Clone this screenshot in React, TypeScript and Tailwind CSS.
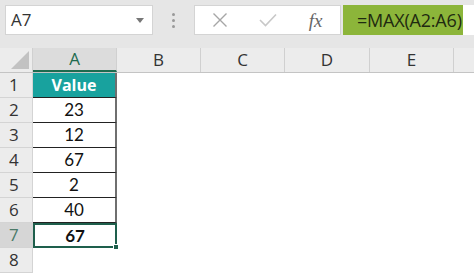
const cols = [
  { name: "A", w: "w-[84px]" },
  { name: "B", w: "w-[84px]" },
  { name: "C", w: "w-[84px]" },
  { name: "D", w: "w-[85px]" },
  { name: "E", w: "w-[84px]" },
];

const values = ["23", "12", "67", "2", "40"];

export default function App() {
  return (
    <div className="w-[474px] h-[276px] bg-white overflow-hidden font-['Open_Sans',sans-serif] text-[#222]">
      {/* Formula bar */}
      <div className="h-[48px] bg-[#e6e6e6] flex items-start pt-[5px]">
        <div className="ml-[5px] w-[148px] h-[30px] bg-white border border-[#d4d4d4] flex items-center justify-between pl-[5px] pr-[8px]">
          <span className="text-[17px] text-[#333]">A7</span>
          <svg width="8" height="5" viewBox="0 0 8 5">
            <path d="M0 0 H8 L4 5 Z" fill="#777" />
          </svg>
        </div>
        <div className="w-[41px] h-[30px] flex flex-col items-center justify-center gap-[3px]">
          <span className="w-[3px] h-[3px] rounded-full bg-[#999]" />
          <span className="w-[3px] h-[3px] rounded-full bg-[#999]" />
          <span className="w-[3px] h-[3px] rounded-full bg-[#999]" />
        </div>
        <div className="w-[147px] h-[30px] bg-white border border-[#d4d4d4] flex items-center">
          <div className="w-[50px] flex justify-center">
            <svg width="16" height="16" viewBox="0 0 16 16">
              <path d="M1.5 1.5 L14.5 14.5 M14.5 1.5 L1.5 14.5" stroke="#a6a6a6" strokeWidth="1.4" fill="none" />
            </svg>
          </div>
          <div className="w-[46px] flex justify-center">
            <svg width="18" height="14" viewBox="0 0 18 14">
              <path d="M1 7 L6.5 12.5 L17 1.5" stroke="#c8c8c8" strokeWidth="1.6" fill="none" />
            </svg>
          </div>
          <div className="flex-1 flex justify-center">
            <span className="font-['Liberation_Serif',serif] italic text-[19px] text-[#666] leading-none">
              fx
            </span>
          </div>
        </div>
        <div className="ml-[2px] w-[120px] h-[30px] bg-[#8cb53a] flex items-center pl-[14px]">
          <span className="text-[18px] text-[#1f2a10] tracking-[-0.2px]">=MAX(A2:A6)</span>
        </div>
        <div className="flex-1 h-[30px] bg-white" />
      </div>

      {/* Column headers */}
      <div className="flex h-[25px] bg-[#ececec] border-b border-[#c4c4c4]">
        <div className="w-[33px] h-full border-r border-[#d0d0d0] flex items-end justify-end pr-[3px] pb-[3px]">
          <svg width="18" height="18" viewBox="0 0 18 18">
            <path d="M18 0 V18 H0 Z" fill="#c2c2c2" />
          </svg>
        </div>
        {cols.map((c) => (
          <div
            key={c.name}
            className={`${c.w} h-full border-r border-[#d0d0d0] flex items-center justify-center text-[17px] ${
              c.name === "A" ? "bg-[#dcdcdc] text-[#1e6b4f] border-b-2 border-b-[#1e6b4f]" : "text-[#333]"
            }`}
          >
            {c.name}
          </div>
        ))}
        <div className="flex-1 h-full" />
      </div>

      {/* Rows */}
      {Array.from({ length: 8 }, (_, i) => {
        const row = i + 1;
        const selected = row === 7;
        return (
          <div key={row} className="flex h-[25px]">
            <div
              className={`w-[33px] h-full border-r border-b border-[#d4d4d4] flex items-center pl-[9px] text-[17px] ${
                selected ? "bg-[#d6d6d6] text-[#4a7a68]" : "bg-[#ececec] text-[#333]"
              }`}
            >
              {row}
            </div>
            {row === 1 && (
              <div className="w-[84px] h-full bg-[#18a29e] border-r-2 border-r-[#6f6f6f] border-b border-b-[#222] flex items-center justify-center text-white font-bold text-[16px]">
                Value
              </div>
            )}
            {row >= 2 && row <= 6 && (
              <div className="w-[84px] h-full border-r-2 border-r-[#6f6f6f] border-b border-b-[#222] flex items-center justify-center text-[17px] text-[#111] font-['Lato',sans-serif]">
                {values[row - 2]}
              </div>
            )}
            {selected && (
              <div className="relative w-[84px] h-full border-2 border-[#1e5f4c] flex items-center justify-center text-[17px] font-bold text-[#111] font-['Lato',sans-serif]">
                67
                <span className="absolute -right-[4px] -bottom-[4px] w-[6px] h-[6px] bg-[#1e5f4c] border border-white" />
              </div>
            )}
            {row === 8 && <div className="w-[84px] h-full" />}
            <div className="flex-1 h-full" />
          </div>
        );
      })}
    </div>
  );
}
